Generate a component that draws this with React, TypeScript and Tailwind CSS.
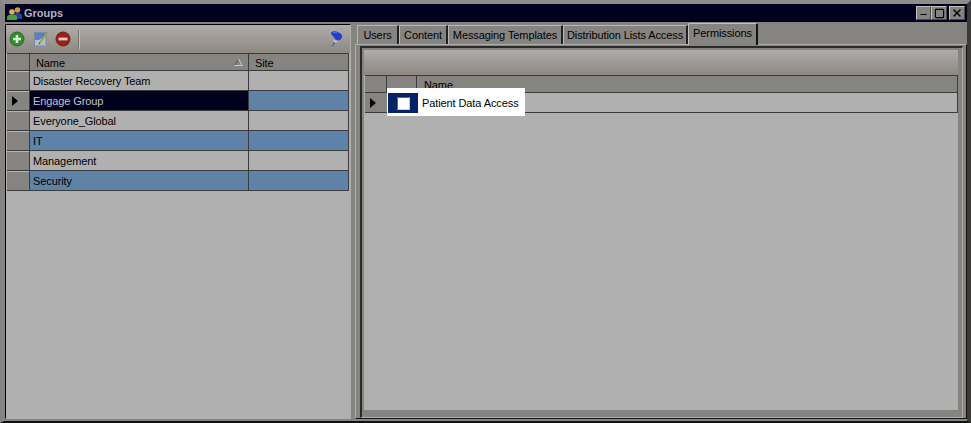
import { Minus, Square, X } from "lucide-react";

const groups = [
  { name: "Disaster Recovery Team", band: false },
  { name: "Engage Group", band: true, current: true },
  { name: "Everyone_Global", band: false },
  { name: "IT", band: true },
  { name: "Management", band: false },
  { name: "Security", band: true },
];

const tabs = [
  { label: "Users", width: "w-[42px]" },
  { label: "Content", width: "w-[49px]" },
  { label: "Messaging Templates", width: "w-[115px]" },
  { label: "Distribution Lists Access", width: "w-[125px]" },
];

function RowArrow() {
  return <div className="h-0 w-0 border-y-[5px] border-l-[6px] border-y-transparent border-l-black" />;
}

function GroupsIcon() {
  return (
    <svg width="15" height="13" viewBox="0 0 15 13">
      <circle cx="10.500" cy="3" r="2.800" fill="#c79a5a" />
      <path d="M7 12V8.500C7 6.500 9 6 10.500 6S15 6.500 15 8.500V12z" fill="#27409c" />
      <circle cx="5" cy="5" r="2.800" fill="#e0ac5c" />
      <path d="M0 13v-3c0-1.800 2.500-2.500 5-2.500S10 8.200 10 10v3z" fill="#46a03a" />
    </svg>
  );
}

function ToolbarIcons() {
  return (
    <div className="flex items-center">
      <svg width="16" height="16" viewBox="0 0 16 16" className="ml-[3px]">
        <circle cx="8" cy="8" r="7" fill="#2f8f2a" stroke="#2a6a28" />
        <path d="M8 4v8M4 8h8" stroke="#dcebd8" strokeWidth="2.600" />
      </svg>
      <svg width="16" height="16" viewBox="0 0 16 16" className="ml-[8px]">
        <rect x="1.500" y="1.500" width="11.500" height="13.500" fill="#b4bdd0" stroke="#7d8aa6" />
        <path d="M2 2h10v3L6 9H2z" fill="#5c80bc" />
        <path d="M6.500 12L15 1" stroke="#8ea83a" strokeWidth="1.800" />
        <path d="M6.500 11.500l-1 2 2-1z" fill="#3a3a48" />
      </svg>
      <svg width="16" height="16" viewBox="0 0 16 16" className="ml-[6px]">
        <circle cx="8" cy="8" r="7" fill="#9c1f18" stroke="#74201a" />
        <path d="M3.500 8h9" stroke="#e0cfca" strokeWidth="2.800" />
      </svg>
      <div className="ml-[7px] h-[19px] w-[2px] border-l border-[#77746f] bg-[#c0bebb]" />
    </div>
  );
}

function PinIcon() {
  return (
    <svg width="14" height="16" viewBox="0 0 14 16">
      <path d="M5 10.500L2.500 15.500" stroke="#4f6f96" strokeWidth="1.500" />
      <path d="M3 9l5 1.500-3 1z" fill="#d8dce8" />
      <path d="M1 1.500C3-.2 6 0 8.500 1.500c2 .5 3.500 2 3.500 4 0 2-1 3-2.500 3.500-2.500.8-4.500-.5-5.500-2.500C3 5 1 3.500 1 1.500z" fill="#1f3fd0" />
      <path d="M3 2c1.500-.8 3-.5 4 .2" stroke="#5f7fe8" fill="none" />
    </svg>
  );
}

function SortGlyph() {
  return (
    <svg width="9" height="8" viewBox="0 0 9 8" className="absolute right-[5px] top-[4px]">
      <path d="M4.500 1L1 7" stroke="#5c5a57" fill="none" />
      <path d="M4.500 1L8 7M0.500 7.500H8.500" stroke="#cfcdc9" fill="none" />
    </svg>
  );
}

function GroupRow({ name, band, current }: { name: string; band: boolean; current?: boolean }) {
  return (
    <div className="flex h-5 shrink-0 border-b border-[#3b3b3b]">
      <div className="flex w-[22px] shrink-0 items-center border-t border-t-[#b9b7b3] bg-[#868480] pl-[5px]">
        {current && <RowArrow />}
      </div>
      <div
        className={`flex w-[220px] shrink-0 items-center whitespace-nowrap border-x border-[#3b3b3b] pl-[3px] pt-[2px] ${
          current ? "bg-[#00001f] text-[#c4c6cc]" : band ? "bg-[#5f83a8] text-black" : "bg-[#b0b0b0] text-black"
        }`}
      >
        {name}
      </div>
      <div className={`flex-1 border-r border-[#3b3b3b] ${band ? "bg-[#5f83a8]" : "bg-[#b0b0b0]"}`} />
    </div>
  );
}

export default function App() {
  return (
    <div className="flex h-[423px] w-[971px] flex-col border-x-[4px] border-t-[4px] border-b-[2px] border-x-[#868480] border-t-[#8f8d89] border-b-[#111] border-r-[#3a3936] bg-[#868480] font-['Liberation_Sans',sans-serif] text-[11px] leading-none tracking-[-0.1px] text-black">
      {/* title bar */}
      <div className="ml-[1px] flex h-[18px] shrink-0 items-center bg-[#00001f] pl-[2px] pr-[2px]">
        <GroupsIcon />
        <span className="ml-[2px] text-[11px] font-bold tracking-normal text-[#b0b2ba]">Groups</span>
        <div className="ml-auto flex">
          <button className="flex h-[14px] w-[15px] items-end justify-center border border-[#4a4a4a] border-t-[#c0bfbc] border-l-[#c0bfbc] bg-[#868480]">
            <Minus size={9} strokeWidth={3} color="#000" />
          </button>
          <button className="flex h-[14px] w-[16px] items-center justify-center border border-[#4a4a4a] border-t-[#c0bfbc] border-l-[#c0bfbc] bg-[#868480]">
            <Square size={11} strokeWidth={2.5} color="#000" />
          </button>
          <button className="ml-[2px] flex h-[14px] w-[16px] items-center justify-center border border-[#4a4a4a] border-t-[#c0bfbc] border-l-[#c0bfbc] bg-[#868480]">
            <X size={12} strokeWidth={3} color="#000" />
          </button>
        </div>
      </div>

      <div className="flex min-h-0 flex-1 pb-[2px] pt-[2px]">
        {/* left pane */}
        <div className="ml-[1px] flex w-[346px] shrink-0 flex-col border border-black border-r-[#b0aeaa] border-b-[#b0aeaa] bg-[#b0b0b0]">
          <div className="flex h-[28px] shrink-0 items-center justify-between bg-gradient-to-b from-[#b0acac] to-[#8e8882] pr-[6px]">
            <ToolbarIcons />
            <PinIcon />
          </div>
          <div className="mx-[1px]">
            <div className="flex h-[18px] border-y border-[#3b3b3b] bg-[#868480]">
              <div className="w-[23px] shrink-0 border-r border-[#3b3b3b]" />
              <div className="relative flex w-[219px] shrink-0 items-center border-r border-[#3b3b3b] pl-[6px] pt-[2px]">
                Name
                <SortGlyph />
              </div>
              <div className="flex flex-1 items-center border-r border-[#3b3b3b] pl-[6px] pt-[2px]">Site</div>
            </div>
            {groups.map((g) => (
              <GroupRow key={g.name} {...g} />
            ))}
          </div>
        </div>

        {/* right pane */}
        <div className="ml-[4px] flex min-w-0 flex-1 flex-col">
          <div className="flex h-[20px] shrink-0 items-end pl-[2px]">
            {tabs.map((t) => (
              <div
                key={t.label}
                className={`flex h-[19px] ${t.width} shrink-0 items-center justify-center whitespace-nowrap border-l border-r-2 border-t border-l-[#b9b7b3] border-r-[#222] border-t-[#b9b7b3] bg-[#868480]`}
              >
                {t.label}
              </div>
            ))}
            <div className="relative z-10 -mb-[1px] flex h-[22px] w-[70px] shrink-0 items-center justify-center whitespace-nowrap rounded-t-[2px] border-l border-r-2 border-t border-l-[#c4c2be] border-r-[#111] border-t-[#c4c2be] bg-[#868480] pb-[3px]">
              Permissions
            </div>
          </div>
          <div className="flex min-h-0 flex-1 flex-col border border-b-[#111] border-l-[#b0aeaa] border-r-[#111] border-t-[#b0aeaa] pl-[4px] pr-[3px] pt-[1px]">
            <div className="flex min-h-0 flex-1 flex-col border-b border-l-2 border-r border-t-2 border-b-[#b0aeaa] border-l-[#2a2a2a] border-r-[#b0aeaa] border-t-[#2a2a2a] pb-[7px] pl-[2px] pr-[4px] pt-[2px]">
              <div className="flex min-h-0 flex-1 flex-col bg-[#b0b0b0]">
                <div className="h-[25px] shrink-0 bg-gradient-to-b from-[#b0acac] to-[#8e8882]" />
                <div className="ml-[1px] flex h-[18px] shrink-0 border-y border-[#3b3b3b] bg-[#868480]">
                  <div className="w-[22px] shrink-0 border-r border-[#3b3b3b]" />
                  <div className="w-[30px] shrink-0 border-r border-[#3b3b3b]" />
                  <div className="flex-1 whitespace-nowrap border-r border-[#3b3b3b] pl-[7px] pt-[4px]">Name</div>
                </div>
                <div className="relative ml-[1px] flex h-[20px] shrink-0 border-b border-r border-[#3b3b3b]">
                  <div className="flex w-[22px] shrink-0 items-center bg-[#868480] pl-[5px]">
                    <RowArrow />
                  </div>
                  {/* white callout around the permission */}
                  <div className="absolute left-[22px] top-[-5px] flex h-[28px] w-[138px] border-b-[3px] border-l border-r-2 border-t-[5px] border-white bg-white">
                    <div className="flex w-[30px] shrink-0 items-center justify-center bg-[#052468]">
                      <div className="h-[13px] w-[13px] border border-b-[#ccc] border-l-[#666] border-r-[#ccc] border-t-[#666] bg-white" />
                    </div>
                    <div className="flex flex-1 items-center whitespace-nowrap pl-[4px]">Patient Data Access</div>
                  </div>
                </div>
              </div>
            </div>
          </div>
        </div>
      </div>
    </div>
  );
}
